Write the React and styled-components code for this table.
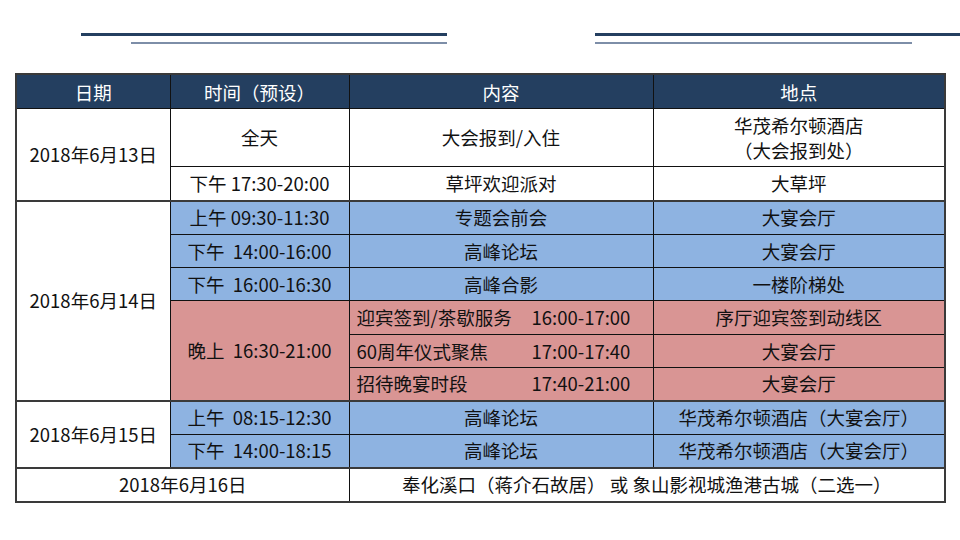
import React from 'react';
import styled, { createGlobalStyle } from 'styled-components';

const Global = createGlobalStyle`
  html, body { margin: 0; padding: 0; background: #fff; }
  body { font-family: "Noto Sans CJK SC", "Liberation Sans", sans-serif; }
`;

const Page = styled.div`
  width: 960px;
  height: 540px;
  overflow: hidden;
`;

const Rules = styled.div`
  display: flex;
  gap: 148px;
  padding: 33px 0 0 81px;
  margin-bottom: 29px;
`;

const RuleGroup = styled.div`
  display: flex;
  flex-direction: column;
  width: ${p => p.w}px;
  flex-shrink: 0;
`;

const Thick = styled.div`
  height: 3px;
  flex-shrink: 0;
  background: #243f60;
`;

const Thin = styled.div`
  height: 2px;
  flex-shrink: 0;
  margin-top: 6px;
  margin-left: ${p => p.offset || 0}px;
  width: ${p => p.w}px;
  background: #7d8ea8;
`;

const Table = styled.table`
  margin: 0 0 0 15px;
  width: 929px;
  border-collapse: collapse;
  table-layout: fixed;
  border: 2px solid #3a3a3a;
  font-size: 18.5px;
  color: #111;
`;

const Th = styled.th`
  background: #243f60;
  color: #fff;
  font-weight: normal;
  height: 33px;
  padding: 0;
  border: 1px solid #111;
`;

const Td = styled.td`
  padding: 0 0 0 ${p => (p.left ? '7px' : '0')};
  text-align: ${p => (p.left ? 'left' : 'center')};
  white-space: pre;
  line-height: 25px;
  border: 1px solid #111;
  background: ${p => (p.tone === 'blue' ? '#8eb3e1' : p.tone === 'red' ? '#d99594' : '#fff')};
  ${p => p.topGroup && 'border-top: 2px solid #3a3a3a;'}
`;

const Tr = styled.tr`
  height: ${p => p.h || 33}px;
`;

const Split = styled.div`
  display: flex;
`;

const Label = styled.span`
  width: 175px;
  flex-shrink: 0;
`;

const rows14 = [
  ['上午 09:30-11:30', '专题会前会', '大宴会厅'],
  ['下午  14:00-16:00', '高峰论坛', '大宴会厅'],
  ['下午  16:00-16:30', '高峰合影', '一楼阶梯处'],
];

const evening = [
  ['迎宾签到/茶歇服务', '16:00-17:00', '序厅迎宾签到动线区'],
  ['60周年仪式聚焦', '17:00-17:40', '大宴会厅'],
  ['招待晚宴时段', '17:40-21:00', '大宴会厅'],
];

export default function App() {
  return (
    <Page>
      <Global />
      <Rules>
        <RuleGroup w={366}>
          <Thick />
          <Thin offset={50} w={316} />
        </RuleGroup>
        <RuleGroup w={365}>
          <Thick />
          <Thin w={317} />
        </RuleGroup>
      </Rules>
      <Table>
        <colgroup>
          <col style={{ width: 154 }} />
          <col style={{ width: 179 }} />
          <col style={{ width: 304 }} />
          <col style={{ width: 292 }} />
        </colgroup>
        <thead>
          <tr>
            <Th>日期</Th>
            <Th>时间（预设）</Th>
            <Th>内容</Th>
            <Th>地点</Th>
          </tr>
        </thead>
        <tbody>
          <Tr h={58}>
            <Td rowSpan={2}>2018年6月13日</Td>
            <Td>全天</Td>
            <Td>大会报到/入住</Td>
            <Td>{'华茂希尔顿酒店\n（大会报到处）'}</Td>
          </Tr>
          <Tr h={34}>
            <Td>下午 17:30-20:00</Td>
            <Td>草坪欢迎派对</Td>
            <Td>大草坪</Td>
          </Tr>
          {rows14.map((r, i) => (
            <Tr key={r[0]} h={i === 0 ? 34 : 33}>
              {i === 0 && (
                <Td rowSpan={6} topGroup>2018年6月14日</Td>
              )}
              <Td tone="blue" topGroup={i === 0}>{r[0]}</Td>
              <Td tone="blue" topGroup={i === 0}>{r[1]}</Td>
              <Td tone="blue" topGroup={i === 0}>{r[2]}</Td>
            </Tr>
          ))}
          {evening.map((r, i) => (
            <Tr key={r[0]} h={i === 0 ? 34 : 33}>
              {i === 0 && (
                <Td rowSpan={3} tone="red">晚上  16:30-21:00</Td>
              )}
              <Td tone="red" left>
                <Split>
                  <Label>{r[0]}</Label>
                  <span>{r[1]}</span>
                </Split>
              </Td>
              <Td tone="red">{r[2]}</Td>
            </Tr>
          ))}
          <Tr h={34}>
            <Td rowSpan={2} topGroup>2018年6月15日</Td>
            <Td tone="blue" topGroup>上午  08:15-12:30</Td>
            <Td tone="blue" topGroup>高峰论坛</Td>
            <Td tone="blue" topGroup>华茂希尔顿酒店（大宴会厅）</Td>
          </Tr>
          <Tr h={33}>
            <Td tone="blue">下午  14:00-18:15</Td>
            <Td tone="blue">高峰论坛</Td>
            <Td tone="blue">华茂希尔顿酒店（大宴会厅）</Td>
          </Tr>
          <Tr h={34}>
            <Td colSpan={2} topGroup>2018年6月16日</Td>
            <Td colSpan={2} topGroup>奉化溪口（蒋介石故居） 或 象山影视城渔港古城（二选一）</Td>
          </Tr>
        </tbody>
      </Table>
    </Page>
  );
}
